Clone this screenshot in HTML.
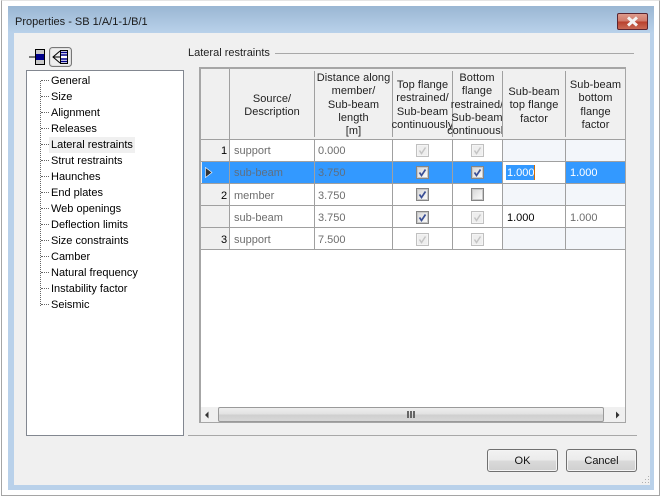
<!DOCTYPE html>
<html><head><meta charset="utf-8"><style>
html,body{margin:0;padding:0;width:661px;height:498px;overflow:hidden;background:#fff}
*{box-sizing:border-box}
body{font-family:"Liberation Sans",sans-serif;font-size:11px;color:#000;position:relative}
.a{position:absolute}
.t{position:absolute;white-space:nowrap;line-height:13px}
.c{position:absolute;text-align:center;line-height:13.3px;white-space:nowrap;color:#222;letter-spacing:.05px}
.h{position:absolute;background:#a0a0a0}
.g{color:#6d6d6d}
.cb{position:absolute;width:13px;height:13px;border:1px solid #c0c0c0;background:#eee;box-shadow:inset 0 0 0 1px #f4f4f4}
.cb.on{border-color:#858585;background:linear-gradient(135deg,#d4d4d4,#fff);box-shadow:inset 0 0 0 1px #c8c8c8}
.cb svg{position:absolute;left:0;top:0}
.btn{position:absolute;height:23px;border:1px solid #707070;border-radius:3px;background:linear-gradient(#f2f2f2 0,#ebebeb 48%,#dadada 52%,#cfcfcf 100%);box-shadow:inset 0 0 0 1px #f4f4f4;text-align:center;line-height:23px;color:#111}
</style></head><body>
<div class="a" style="left:1px;top:0;width:659px;height:496px;border:1px solid #a5a5a5;border-top-color:#e4e4e4;background:#fff"></div>
<div class="a" style="left:8px;top:6px;width:646px;height:484px;background:#b9d1ea"></div>
<div class="a" style="left:8px;top:6px;width:646px;height:27px;background:linear-gradient(#9ab6d3,#b9d1ea)"></div>
<div class="a" style="left:14px;top:33px;width:636px;height:452px;background:#f0f0f0"></div>
<div class="t" style="left:15px;top:16px;color:#1b1b1b;font-size:11px">Properties - SB 1/A/1-1/B/1</div>

<div class="a" style="left:617px;top:13px;width:31px;height:17px;border:1px solid #5a2530;border-radius:2px;background:linear-gradient(#dd9a8c 0,#d07a6a 48%,#b8402c 52%,#c96a55 100%)"></div>
<svg class="a" style="left:626px;top:16px" width="13" height="11"><path d="M2 1.500L11 9.500M11 1.500L2 9.500" stroke="#f4f4f4" stroke-width="3"/></svg>

<svg class="a" style="left:28px;top:46px" width="46" height="22">
<path d="M1 11H8" stroke="#000"/>
<rect x="7.500" y="3.500" width="9" height="15" fill="#c8c8c8" stroke="#000"/>
<rect x="8" y="8" width="8" height="6" fill="#00008c"/>
<rect x="21.500" y="1.500" width="22" height="19" rx="3" fill="#dedede" stroke="#777"/>
<rect x="23" y="3" width="19" height="16" rx="2" fill="#eee"/>
<rect x="32.500" y="4.500" width="7" height="13" fill="#fff" stroke="#000"/>
<path d="M33 6.500h6M33 9h6M33 13h6M33 15.500h6" stroke="#00008c" stroke-width="1.500"/>
<path d="M32 5L25 11L32 17M25 11H33" stroke="#000" fill="none"/>
</svg>

<div class="a" style="left:26px;top:70px;width:158px;height:366px;background:#fff;border:1px solid #828790"></div>
<div class="a" style="left:40px;top:81px;width:0;height:225px;border-left:1px dotted #666"></div>
<div class="a" style="left:49px;top:137px;width:86px;height:16px;background:#f0f0f0"></div>
<div id="tree">
<div class="a" style="left:41px;top:80px;width:8px;border-top:1px dotted #666"></div><div class="t" style="left:51px;top:75px">General</div>
<div class="a" style="left:41px;top:96px;width:8px;border-top:1px dotted #666"></div><div class="t" style="left:51px;top:91px">Size</div>
<div class="a" style="left:41px;top:112px;width:8px;border-top:1px dotted #666"></div><div class="t" style="left:51px;top:107px">Alignment</div>
<div class="a" style="left:41px;top:128px;width:8px;border-top:1px dotted #666"></div><div class="t" style="left:51px;top:123px">Releases</div>
<div class="a" style="left:41px;top:144px;width:8px;border-top:1px dotted #666"></div><div class="t" style="left:51px;top:139px">Lateral restraints</div>
<div class="a" style="left:41px;top:160px;width:8px;border-top:1px dotted #666"></div><div class="t" style="left:51px;top:155px">Strut restraints</div>
<div class="a" style="left:41px;top:176px;width:8px;border-top:1px dotted #666"></div><div class="t" style="left:51px;top:171px">Haunches</div>
<div class="a" style="left:41px;top:192px;width:8px;border-top:1px dotted #666"></div><div class="t" style="left:51px;top:187px">End plates</div>
<div class="a" style="left:41px;top:208px;width:8px;border-top:1px dotted #666"></div><div class="t" style="left:51px;top:203px">Web openings</div>
<div class="a" style="left:41px;top:224px;width:8px;border-top:1px dotted #666"></div><div class="t" style="left:51px;top:219px">Deflection limits</div>
<div class="a" style="left:41px;top:240px;width:8px;border-top:1px dotted #666"></div><div class="t" style="left:51px;top:235px">Size constraints</div>
<div class="a" style="left:41px;top:256px;width:8px;border-top:1px dotted #666"></div><div class="t" style="left:51px;top:251px">Camber</div>
<div class="a" style="left:41px;top:272px;width:8px;border-top:1px dotted #666"></div><div class="t" style="left:51px;top:267px">Natural frequency</div>
<div class="a" style="left:41px;top:288px;width:8px;border-top:1px dotted #666"></div><div class="t" style="left:51px;top:283px">Instability factor</div>
<div class="a" style="left:41px;top:304px;width:8px;border-top:1px dotted #666"></div><div class="t" style="left:51px;top:299px">Seismic</div>
</div>

<div class="t" style="left:188px;top:47px;color:#222">Lateral restraints</div>
<div class="a" style="left:275px;top:53px;width:359px;height:1px;background:#a8a8a8"></div>

<!-- grid -->
<div class="a" style="left:199px;top:67px;width:427px;height:356px;background:#fff;border:2px solid #a6a6a6;border-width:2px 1px 1px 2px"></div>
<div class="a" style="left:201px;top:69px;width:424px;height:70px;background:#f0f0f0"></div>
<div class="a" style="left:201px;top:139px;width:28px;height:110px;background:#f0f0f0"></div>
<div class="a" style="left:503px;top:140px;width:122px;height:21px;background:#f3f6fa"></div>
<div class="a" style="left:503px;top:184px;width:122px;height:21px;background:#f3f6fa"></div>
<div class="a" style="left:503px;top:228px;width:122px;height:21px;background:#f3f6fa"></div>
<div class="a" style="left:202px;top:162px;width:423px;height:21px;background:#3399ff"></div>

<div class="h" style="left:229px;top:69px;width:1px;height:180px"></div>
<div class="h" style="left:314px;top:71px;width:1px;height:66px"></div>
<div class="h" style="left:392px;top:71px;width:1px;height:66px"></div>
<div class="h" style="left:452px;top:71px;width:1px;height:66px"></div>
<div class="h" style="left:502px;top:71px;width:1px;height:66px"></div>
<div class="h" style="left:565px;top:71px;width:1px;height:66px"></div>
<div class="h" style="left:314px;top:139px;width:1px;height:110px"></div>
<div class="h" style="left:392px;top:139px;width:1px;height:110px"></div>
<div class="h" style="left:452px;top:139px;width:1px;height:110px"></div>
<div class="h" style="left:502px;top:139px;width:1px;height:110px"></div>
<div class="h" style="left:565px;top:139px;width:1px;height:110px"></div>
<div class="h" style="left:201px;top:139px;width:424px;height:1px"></div>
<div class="h" style="left:201px;top:161px;width:424px;height:1px"></div>
<div class="h" style="left:201px;top:183px;width:424px;height:1px"></div>
<div class="h" style="left:201px;top:205px;width:424px;height:1px"></div>
<div class="h" style="left:201px;top:227px;width:424px;height:1px"></div>
<div class="h" style="left:201px;top:249px;width:424px;height:1px"></div>

<div class="c" style="left:230px;top:93px;width:84px">Source/<br>Description</div>
<div class="c" style="left:315px;top:72px;width:77px">Distance along<br>member/<br>Sub-beam<br>length<br>[m]</div>
<div class="c" style="left:383px;top:79px;width:79px;clip-path:inset(0 10px 0 0)">Top flange<br>restrained/<br>Sub-beam<br>continuously</div>
<div class="c" style="left:437px;top:72px;width:80px;clip-path:inset(0 15px 0 0)">Bottom<br>flange<br>restrained/<br>Sub-beam<br>continuoush</div>
<div class="c" style="left:503px;top:86px;width:62px">Sub-beam<br>top flange<br>factor</div>
<div class="c" style="left:566px;top:79px;width:59px">Sub-beam<br>bottom<br>flange<br>factor</div>

<div class="t" style="left:221px;top:145px">1</div>
<div class="t" style="left:221px;top:190px">2</div>
<div class="t" style="left:221px;top:234px">3</div>
<svg class="a" style="left:205px;top:167px" width="8" height="11"><path d="M0.500 0.500L7 5.500L0.500 10.500Z" fill="#333" stroke="#fff" stroke-width=".6"/></svg>

<div class="t g" style="left:234px;top:145px">support</div>
<div class="t" style="left:234px;top:167px;color:#5f6f80">sub-beam</div>
<div class="t g" style="left:234px;top:190px">member</div>
<div class="t g" style="left:234px;top:212px">sub-beam</div>
<div class="t g" style="left:234px;top:234px">support</div>
<div class="t g" style="left:318px;top:145px">0.000</div>
<div class="t" style="left:318px;top:167px;color:#5f6f80">3.750</div>
<div class="t g" style="left:318px;top:190px">3.750</div>
<div class="t g" style="left:318px;top:212px">3.750</div>
<div class="t g" style="left:318px;top:234px">7.500</div>

<div class="cb" style="left:416px;top:144px"><svg width="11" height="11"><path d="M2.500 5.500L4.500 8.500L8.500 2.500" stroke="#c4c4c4" stroke-width="1.500" fill="none"/></svg></div>
<div class="cb on" style="left:416px;top:166px"><svg width="11" height="11"><path d="M2.500 5.500L4.500 8.500L8.500 2.500" stroke="#3a4f96" stroke-width="1.700" fill="none"/></svg></div>
<div class="cb on" style="left:416px;top:188px"><svg width="11" height="11"><path d="M2.500 5.500L4.500 8.500L8.500 2.500" stroke="#3a4f96" stroke-width="1.700" fill="none"/></svg></div>
<div class="cb on" style="left:416px;top:211px"><svg width="11" height="11"><path d="M2.500 5.500L4.500 8.500L8.500 2.500" stroke="#3a4f96" stroke-width="1.700" fill="none"/></svg></div>
<div class="cb" style="left:416px;top:233px"><svg width="11" height="11"><path d="M2.500 5.500L4.500 8.500L8.500 2.500" stroke="#c4c4c4" stroke-width="1.500" fill="none"/></svg></div>

<div class="cb" style="left:471px;top:144px"><svg width="11" height="11"><path d="M2.500 5.500L4.500 8.500L8.500 2.500" stroke="#c4c4c4" stroke-width="1.500" fill="none"/></svg></div>
<div class="cb on" style="left:471px;top:166px"><svg width="11" height="11"><path d="M2.500 5.500L4.500 8.500L8.500 2.500" stroke="#3a4f96" stroke-width="1.700" fill="none"/></svg></div>
<div class="cb on" style="left:471px;top:188px"></div>
<div class="cb" style="left:471px;top:211px"><svg width="11" height="11"><path d="M2.500 5.500L4.500 8.500L8.500 2.500" stroke="#c4c4c4" stroke-width="1.500" fill="none"/></svg></div>
<div class="cb" style="left:471px;top:233px"><svg width="11" height="11"><path d="M2.500 5.500L4.500 8.500L8.500 2.500" stroke="#c4c4c4" stroke-width="1.500" fill="none"/></svg></div>

<div class="a" style="left:503px;top:162px;width:62px;height:21px;background:#fff"></div>
<div class="a" style="left:506px;top:165px;width:28px;height:15px;background:#3399ff"></div>
<div class="a" style="left:534px;top:165px;width:1px;height:15px;background:#d46a00"></div>
<div class="t" style="left:507px;top:167px;color:#fff">1.000</div>
<div class="t" style="left:570px;top:167px;color:#fff">1.000</div>
<div class="t" style="left:507px;top:212px;color:#000">1.000</div>
<div class="t g" style="left:570px;top:212px">1.000</div>

<!-- scrollbar -->
<div class="a" style="left:201px;top:407px;width:424px;height:15px;background:#f0f0f0"></div>
<svg class="a" style="left:204px;top:411px" width="6" height="8"><path d="M4.500 0.500V7.500L1 4Z" fill="#333"/></svg>
<svg class="a" style="left:615px;top:411px" width="6" height="8"><path d="M1 0.500V7.500L4.500 4Z" fill="#333"/></svg>
<div class="a" style="left:218px;top:407px;width:386px;height:15px;border:1px solid #9a9a9a;border-radius:2px;background:linear-gradient(#eee 0,#e2e2e2 45%,#cfcfcf 55%,#d8d8d8 100%)"></div>
<div class="a" style="left:407px;top:411px;width:2px;height:7px;background:#666"></div>
<div class="a" style="left:410px;top:411px;width:2px;height:7px;background:#666"></div>
<div class="a" style="left:413px;top:411px;width:2px;height:7px;background:#666"></div>

<div class="a" style="left:188px;top:435px;width:449px;height:1px;background:#a8a8a8"></div>
<div class="btn" style="left:487px;top:449px;width:71px">OK</div>
<div class="btn" style="left:566px;top:449px;width:71px">Cancel</div>
<svg class="a" style="left:640px;top:475px" width="10" height="10"><path d="M8 1.500h1M5 4.500h1M8 4.500h1M2 7.500h1M5 7.500h1M8 7.500h1" stroke="#b0b0b0"/></svg>
</body></html>
